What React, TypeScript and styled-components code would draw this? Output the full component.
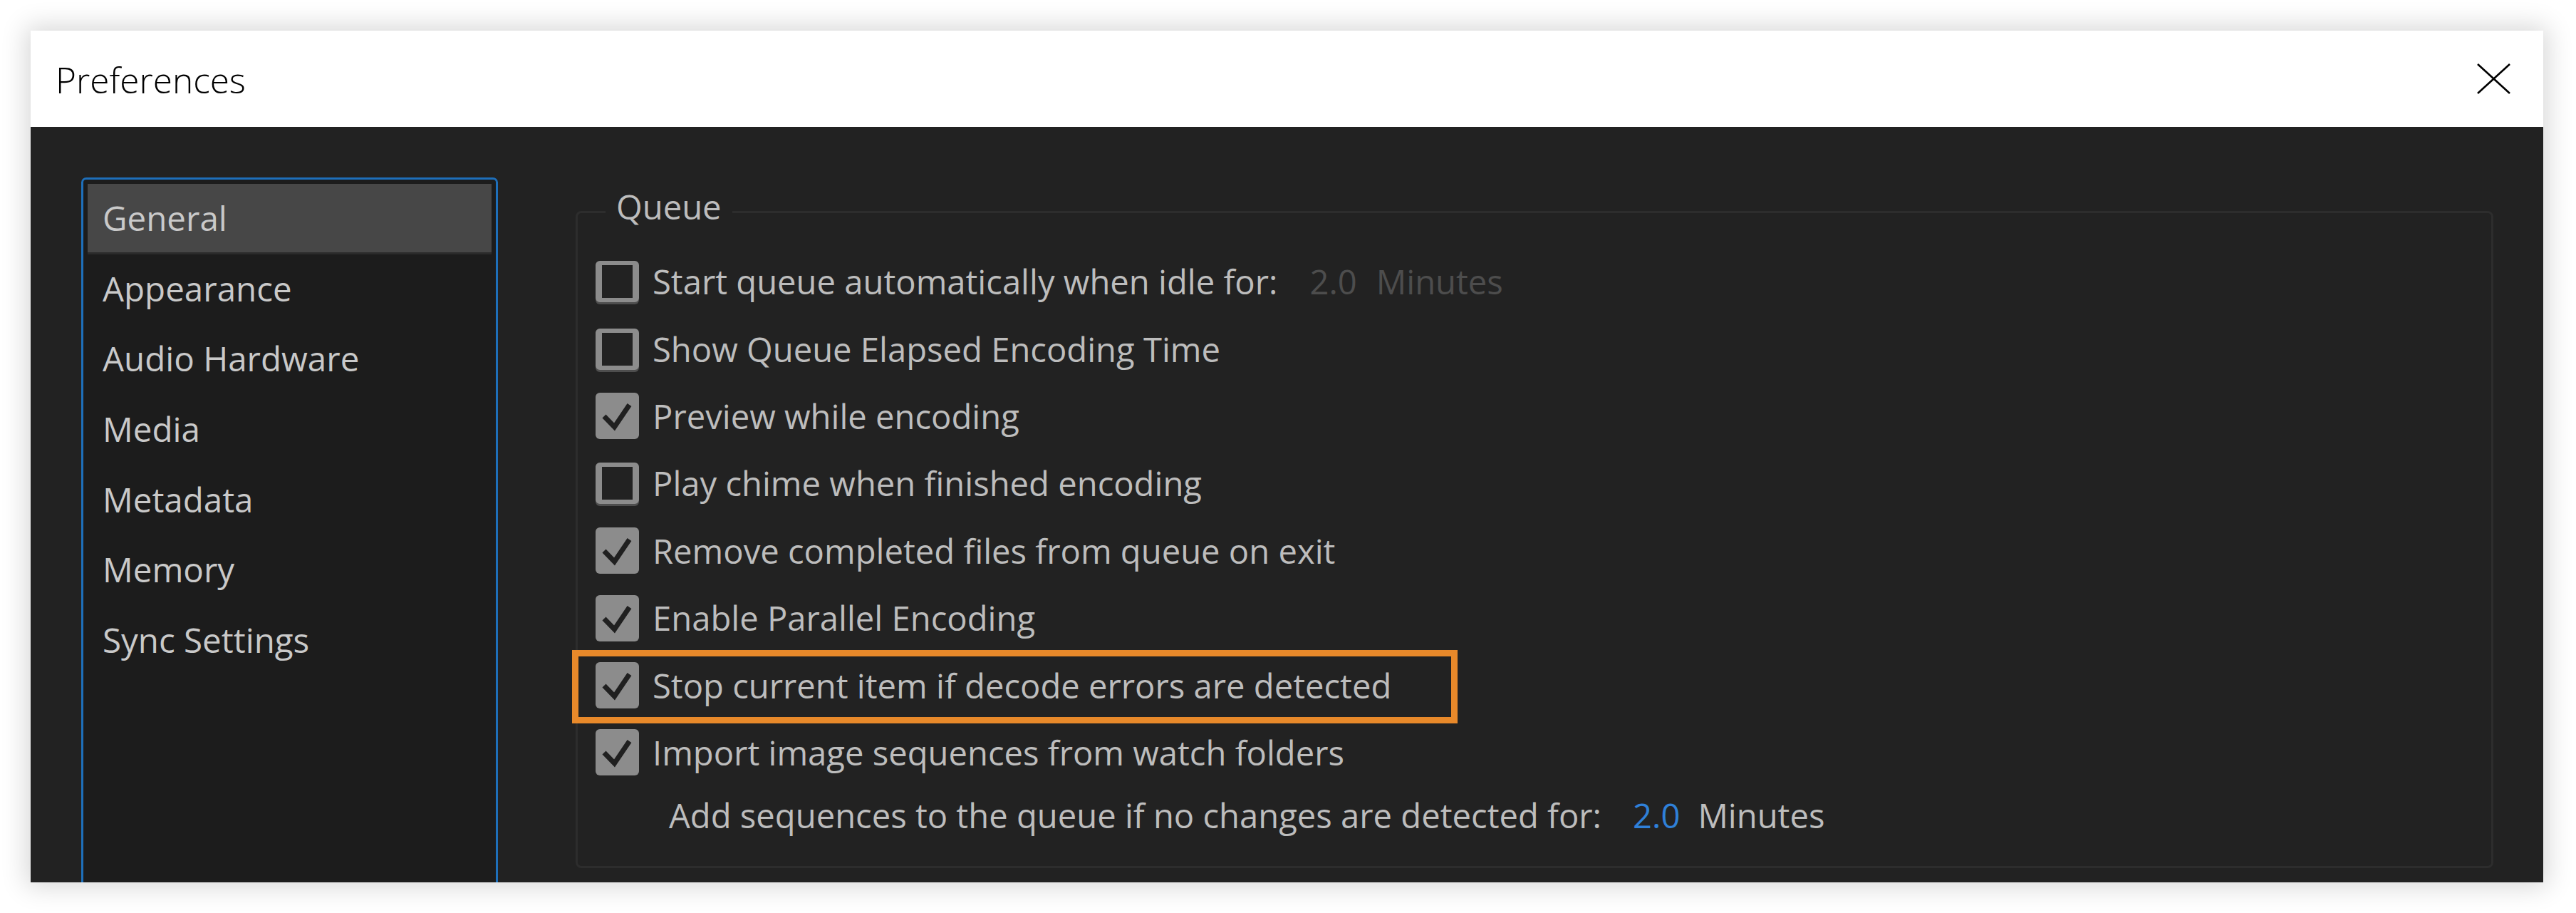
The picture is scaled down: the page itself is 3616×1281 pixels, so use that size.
import React from "react";
import styled, { createGlobalStyle } from "styled-components";

const GlobalStyle = createGlobalStyle`
  html, body {
    margin: 0;
    padding: 0;
    background: #ffffff;
    width: 3616px;
    height: 1281px;
    overflow: hidden;
  }
  *, *::before, *::after { box-sizing: border-box; }
`;

const FONT = `"Open Sans", "Noto Sans", "Liberation Sans", sans-serif`;

const Page = styled.div`
  width: 3616px;
  height: 1281px;
  padding: 43px 46px 43px 43px;
`;

const Dialog = styled.div`
  width: 3527px;
  height: 1195px;
  display: flex;
  flex-direction: column;
  box-shadow: 0 0 34px 6px rgba(0, 0, 0, 0.16);
  overflow: hidden;
`;

const Header = styled.div`
  height: 135px;
  flex-shrink: 0;
  background: #ffffff;
  display: flex;
  justify-content: space-between;
  align-items: flex-start;
`;

const Title = styled.div`
  font-family: ${FONT};
  font-weight: 300;
  font-size: 49.5px;
  line-height: 60px;
  color: #000;
  padding: 39px 0 0 35px;
`;

const CloseButton = styled.button`
  border: 0;
  background: transparent;
  padding: 0;
  margin: 46px 46px 0 0;
  width: 47px;
  height: 43px;
  display: flex;
`;

const Body = styled.div`
  flex: 1;
  background: #222222;
  display: flex;
  align-items: flex-start;
  padding: 71px 70px 0 71px;
  overflow: hidden;
`;

const Sidebar = styled.nav`
  width: 585px;
  height: 1100px;
  flex-shrink: 0;
  background: #1c1c1c;
  border: 3px solid #1e6fba;
  border-radius: 7px 7px 0 0;
  padding: 6px;
`;

const NavItem = styled.div<{ $active?: boolean }>`
  height: 98.7px;
  line-height: 95.7px;
  padding-left: 21px;
  font-family: ${FONT};
  font-size: 47.5px;
  color: #c9c9c9;
  background: ${(p) => (p.$active ? "#474747" : "transparent")};
  border-bottom: 3px solid ${(p) => (p.$active ? "#2b2b2b" : "transparent")};
  white-space: nowrap;
`;

const Main = styled.div`
  flex: 1;
  margin-left: 109px;
  padding-top: 13px;
`;

const Group = styled.fieldset`
  margin: 0;
  height: 956px;
  border: 3px solid #2d2d2d;
  border-radius: 8px;
  padding: 15px 0 0 0;
`;

const Legend = styled.legend`
  margin-left: 39px;
  padding: 0 15px 14px 15px;
  font-family: ${FONT};
  font-size: 47.2px;
  line-height: 57px;
  color: #bdbdbd;
`;

const Row = styled.div<{ $h?: number; $indent?: number; $marked?: boolean }>`
  position: relative;
  height: ${(p) => p.$h ?? 94.4}px;
  display: flex;
  align-items: center;
  gap: 19px;
  padding-left: ${(p) => p.$indent ?? 25}px;
  font-family: ${FONT};
  font-size: 47.2px;
  color: #bdbdbd;
  white-space: nowrap;

  ${(p) =>
    p.$marked &&
    `
    &::after {
      content: "";
      position: absolute;
      left: -8px;
      top: -2px;
      width: 1243px;
      height: 103px;
      border: 9px solid #e8892a;
      pointer-events: none;
    }
  `}
`;

const Box = styled.span<{ $checked?: boolean }>`
  flex-shrink: 0;
  width: 61px;
  height: ${(p) => (p.$checked ? 65 : 58)}px;
  border-radius: 6px;
  display: flex;
  align-items: center;
  justify-content: center;
  ${(p) =>
    p.$checked
      ? `background: #8c8c8c;`
      : `background: #222222;
         border-style: solid;
         border-color: #8c8c8c;
         border-width: 6px 9px;
         box-shadow: 0 3px 0 #4e4e4e;`}
`;

const Label = styled.span``;

const Value = styled.span<{ $tone: "dim" | "blue" | "plain"; $gap: number }>`
  margin-left: ${(p) => p.$gap}px;
  color: ${(p) =>
    p.$tone === "dim" ? "#4d4d4d" : p.$tone === "blue" ? "#2f80d8" : "#bdbdbd"};
`;

const Check = () => (
  <svg width="61" height="65" viewBox="0 0 61 65">
    <polyline
      points="12,33 26.5,48 47.5,17"
      fill="none"
      stroke="#202020"
      strokeWidth="7"
      strokeLinejoin="miter"
    />
  </svg>
);

const CheckBox = ({ checked }: { checked?: boolean }) => (
  <Box $checked={checked}>{checked && <Check />}</Box>
);

const navItems = [
  "General",
  "Appearance",
  "Audio Hardware",
  "Media",
  "Metadata",
  "Memory",
  "Sync Settings",
];

type Option = { label: string; checked: boolean; marked?: boolean };

const options: Option[] = [
  { label: "Show Queue Elapsed Encoding Time", checked: false },
  { label: "Preview while encoding", checked: true },
  { label: "Play chime when finished encoding", checked: false },
  { label: "Remove completed files from queue on exit", checked: true },
  { label: "Enable Parallel Encoding", checked: true },
  { label: "Stop current item if decode errors are detected", checked: true, marked: true },
  { label: "Import image sequences from watch folders", checked: true },
];

export default function App() {
  return (
    <>
      <GlobalStyle />
      <Page>
        <Dialog>
          <Header>
            <Title>Preferences</Title>
            <CloseButton aria-label="Close">
              <svg width="47" height="43" viewBox="0 0 47 43">
                <path d="M1 1 L46 42 M46 1 L1 42" stroke="#000" strokeWidth="2.6" fill="none" />
              </svg>
            </CloseButton>
          </Header>
          <Body>
            <Sidebar>
              {navItems.map((n, i) => (
                <NavItem key={n} $active={i === 0}>
                  {n}
                </NavItem>
              ))}
            </Sidebar>
            <Main>
              <Group>
                <Legend>Queue</Legend>
                <Row>
                  <CheckBox />
                  <Label>
                    Start queue automatically when idle for:
                    <Value $tone="dim" $gap={45}>2.0</Value>
                    <Value $tone="dim" $gap={27}>Minutes</Value>
                  </Label>
                </Row>
                {options.map((o) => (
                  <Row key={o.label} $marked={o.marked}>
                    <CheckBox checked={o.checked} />
                    <Label>{o.label}</Label>
                  </Row>
                ))}
                <Row $h={82.4} $indent={128}>
                  <Label>
                    Add sequences to the queue if no changes are detected for:
                    <Value $tone="blue" $gap={44}>2.0</Value>
                    <Value $tone="plain" $gap={25}>Minutes</Value>
                  </Label>
                </Row>
              </Group>
            </Main>
          </Body>
        </Dialog>
      </Page>
    </>
  );
}
